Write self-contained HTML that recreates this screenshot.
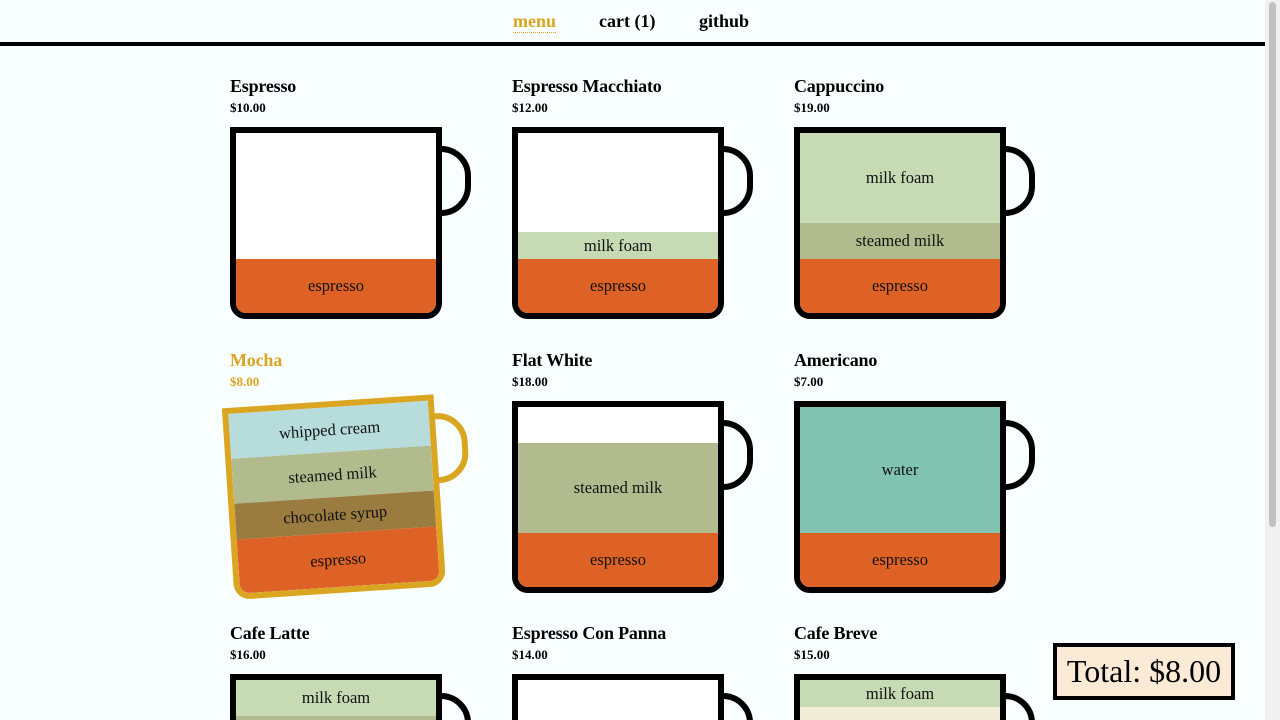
<!DOCTYPE html>
<html style="overflow:hidden;height:720px"><head><meta charset="utf-8"><style>
*{margin:0;padding:0;box-sizing:border-box}
html,body{width:1280px;height:720px;overflow:hidden}
body{background:#f9fefe;font-family:"Liberation Serif",serif;position:relative}
.sb{position:absolute;right:0;top:0;width:15px;height:720px;background:#f1f1f1}
.sb i{position:absolute;left:4px;top:2px;width:7px;height:525px;background:#c1c1c1;border-radius:4px}
.nav{position:absolute;left:0;top:0;width:1265px;height:46px;border-bottom:4px solid #000}
.nav a{position:absolute;top:11px;font-weight:bold;font-size:18px;color:#000;text-decoration:none}
.nav a.on{color:#daa520;border-bottom:1px dotted #daa520;line-height:21px}
.item{position:absolute;width:260px}
.t{font-weight:bold;font-size:18px;line-height:20px;position:absolute;top:-10px;white-space:nowrap;letter-spacing:-0.2px}
.p{font-weight:bold;font-size:13px;position:absolute;top:14px}
.cup{position:absolute;top:41px;left:0;width:212px;height:192px;border:6px solid #000;border-radius:0 0 16px 16px;background:#fff;overflow:hidden;display:flex;flex-direction:column;justify-content:flex-end}
.h{position:absolute;top:60px;left:204px;width:37px;height:70px;border:6px solid #000;border-radius:0 30px 30px 0}
.l{display:flex;align-items:center;justify-content:center;font-size:16.5px;color:#111;flex:none}
.e{background:#de6126;height:54px}.f{background:#c6dab4}.s{background:#b2bb8d}.w{background:#80c3b0}.c{background:#9a7b40}.wc{background:#b6dcdc}.sc{background:#efecd7}
.gold .t,.gold .p{color:#daa520}
.gold .cup{border-color:#daa520}.gold .h{border-color:#daa520}
.rot{position:absolute;left:0;top:0;transform:rotate(-3.8deg);transform-origin:106px 137px}
.total{position:absolute;left:1053px;top:643px;width:182px;height:57px;border:4px solid #000;background:#fbead6;font-size:32px;text-align:center;line-height:49px}
.clip{position:absolute;left:0;top:0;width:1265px;height:720px;overflow:hidden}
</style></head><body>
<div class="nav"><a class="on" style="left:513px">menu</a><a style="left:599px">cart (1)</a><a style="left:699px">github</a></div>
<div class="clip">
<div class="item" style="left:230px;top:86px"><div class="t">Espresso</div><div class="p">$10.00</div><div class="h"></div><div class="cup"><div class="l e">espresso</div></div></div>
<div class="item" style="left:512px;top:86px"><div class="t">Espresso Macchiato</div><div class="p">$12.00</div><div class="h"></div><div class="cup"><div class="l f" style="height:27px">milk foam</div><div class="l e">espresso</div></div></div>
<div class="item" style="left:794px;top:86px"><div class="t">Cappuccino</div><div class="p">$19.00</div><div class="h"></div><div class="cup"><div class="l f" style="height:90px">milk foam</div><div class="l s" style="height:36px">steamed milk</div><div class="l e">espresso</div></div></div>

<div class="item gold" style="left:230px;top:360px"><div class="t">Mocha</div><div class="p">$8.00</div><div class="rot"><div class="h"></div><div class="cup" style="left:-2px"><div class="l wc" style="height:45px">whipped cream</div><div class="l s" style="height:45px">steamed milk</div><div class="l c" style="height:36px">chocolate syrup</div><div class="l e">espresso</div></div></div></div>
<div class="item" style="left:512px;top:360px"><div class="t">Flat White</div><div class="p">$18.00</div><div class="h"></div><div class="cup"><div class="l s" style="height:90px">steamed milk</div><div class="l e">espresso</div></div></div>
<div class="item" style="left:794px;top:360px"><div class="t">Americano</div><div class="p">$7.00</div><div class="h"></div><div class="cup"><div class="l w" style="height:126px">water</div><div class="l e">espresso</div></div></div>

<div class="item" style="left:230px;top:633px"><div class="t">Cafe Latte</div><div class="p">$16.00</div><div class="h"></div><div class="cup" style="justify-content:flex-start"><div class="l f" style="height:36px">milk foam</div><div class="l s" style="height:90px">steamed milk</div><div class="l e">espresso</div></div></div>
<div class="item" style="left:512px;top:633px"><div class="t">Espresso Con Panna</div><div class="p">$14.00</div><div class="h"></div><div class="cup"></div></div>
<div class="item" style="left:794px;top:633px"><div class="t">Cafe Breve</div><div class="p">$15.00</div><div class="h"></div><div class="cup" style="justify-content:flex-start"><div class="l f" style="height:27px">milk foam</div><div class="l sc" style="height:99px">steamed cream</div><div class="l e">espresso</div></div></div>
</div>
<div class="total">Total: $8.00</div>
<div class="sb"><i></i></div>
</body></html>
